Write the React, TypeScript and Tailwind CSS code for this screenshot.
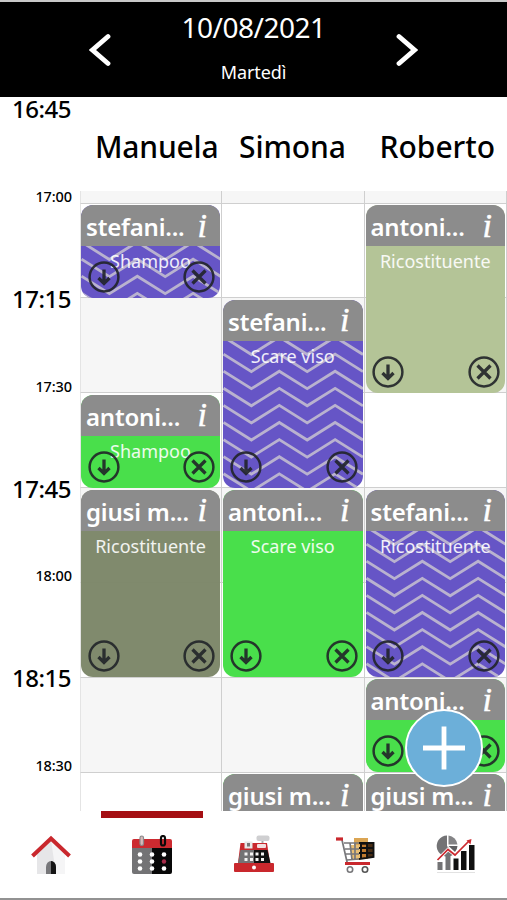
import type { ReactNode } from 'react';
import clsx from 'clsx';

type Tone = 'zigzag' | 'green' | 'sage' | 'olive';

interface Appointment {
  client: string;
  service: string;
  tone: Tone;
  place: string;
}

const operators = [
  { name: 'Manuela', style: 'pl-[15px] tracking-[-0.2px]' },
  { name: 'Simona', style: 'pl-[17px] tracking-[-0.1px]' },
  { name: 'Roberto', style: 'pl-[15px]' },
];

const times = ['16:45', '17:00', '17:15', '17:30', '17:45', '18:00', '18:15', '18:30'];

const appointments: Appointment[] = [
  { client: 'stefani...', service: 'Shampoo', tone: 'zigzag', place: 'col-start-1 row-start-2' },
  { client: 'antoni...', service: 'Ricostituente', tone: 'sage', place: 'col-start-3 row-start-2 row-span-2' },
  { client: 'stefani...', service: 'Scare viso', tone: 'zigzag', place: 'col-start-2 row-start-3 row-span-2' },
  { client: 'antoni...', service: 'Shampoo', tone: 'green', place: 'col-start-1 row-start-4' },
  { client: 'giusi m...', service: 'Ricostituente', tone: 'olive', place: 'col-start-1 row-start-5 row-span-2' },
  { client: 'antoni...', service: 'Scare viso', tone: 'green', place: 'col-start-2 row-start-5 row-span-2' },
  { client: 'stefani...', service: 'Ricostituente', tone: 'zigzag', place: 'col-start-3 row-start-5 row-span-2' },
  { client: 'antoni...', service: '', tone: 'green', place: 'col-start-3 row-start-7' },
  { client: 'giusi m...', service: '', tone: 'green', place: 'col-start-2 row-start-8' },
  { client: 'giusi m...', service: '', tone: 'green', place: 'col-start-3 row-start-8' },
];

const toneStyles: Record<Tone, string> = {
  zigzag: 'bg-[#6655c6]',
  green: 'bg-[#49df4b]',
  sage: 'bg-[#b4c497]',
  olive: 'bg-[#7c8668]/97',
};

const rows = [
  'row-start-1 bg-[#f6f6f6]',
  'row-start-2 bg-white',
  'row-start-3 bg-[#f6f6f6]',
  'row-start-4 bg-white',
  'row-start-5 bg-[#f6f6f6]',
  'row-start-6 bg-white',
  'row-start-7 bg-[#f6f6f6]',
  'row-start-8 bg-white',
];

const cols = ['col-start-1 border-l border-l-[#e4e4e4]', 'col-start-2', 'col-start-3'];

// one chevron line every 17.1px, starting just above the card body
const waves = Array.from({ length: 13 }, (_, i) => 19.9 + i * 17.1);

function Zigzag() {
  return (
    <svg className="absolute inset-0 h-full w-full" fill="none" stroke="#b9b2cf" strokeWidth="2.8">
      {waves.map((y) => (
        <path key={y} d={`M0.5 ${y}l27.9 17.5l27.9 -17.5l27.9 17.5l27.9 -17.5l27.9 17.5`} />
      ))}
    </svg>
  );
}

function RoundIcon({ d }: { d: string }) {
  return (
    <svg width="32" height="32" viewBox="0 0 32 32" fill="none" stroke="#202428" strokeOpacity="0.9">
      <circle cx="16" cy="16" r="14.4" strokeWidth="2.5" />
      <path d={d} strokeWidth="3.3" />
    </svg>
  );
}

function AppointmentCard({ client, service, tone, place }: Appointment) {
  return (
    <article
      className={clsx(
        'relative mt-[1.5px] mr-[2px] mb-[0.5px] ml-px flex flex-col overflow-hidden rounded-[12px]',
        toneStyles[tone],
        place,
      )}
    >
      {tone === 'zigzag' && <Zigzag />}
      <div className="relative flex h-[41px] shrink-0 items-center justify-between bg-[#8c8c8c] pr-[13px] pl-[5px] text-white">
        <span className="pt-[3px] text-[24px] leading-[36px] font-semibold tracking-[-0.2px] whitespace-nowrap">
          {client}
        </span>
        <i className="font-['Liberation_Serif',serif] text-[34px] leading-[36px] [-webkit-text-stroke:0.5px_white]">
          i
        </i>
      </div>
      <p className="relative mt-[3px] -mb-[24px] h-[24px] text-center text-[18px] leading-[24px] text-white/90">
        {service}
      </p>
      <div className="relative mt-auto mb-[5px] flex justify-between pr-[5px] pl-[6.5px]">
        <RoundIcon d="M16 8.500V22M10.500 17L16 22.500L21.500 17" />
        <RoundIcon d="M9.500 9.500L22.500 22.500M22.500 9.500L9.500 22.500" />
      </div>
    </article>
  );
}

function HouseIcon() {
  return (
    <>
      <path d="M6 18L20 5L34 18V39H6Z" fill="#e6e6e8" />
      <path d="M20 5L34 18V39H25Z" fill="#f5f5f6" />
      <path d="M15 39V32a5 6 0 0 1 10 0V39Z" fill="#77777a" />
      <path d="M20 26a5 6 0 0 1 5 6V39H20Z" fill="#151515" />
      <path d="M1.500 21L20 3.500L38.500 21" fill="none" stroke="#c9282d" strokeWidth="4" />
    </>
  );
}

function CalendarIcon() {
  return (
    <>
      <path d="M0 10H20V39H2Q0 39 0 37Z" fill="#737375" />
      <path d="M20 10H40V37Q40 39 38 39H20Z" fill="#080808" />
      <path d="M0 13V6Q0 4 2 4H38Q40 4 40 6V13Z" fill="#cc2a30" />
      <rect x="8" y="1" width="3.500" height="9.500" rx="1.700" fill="#d8b9ba" stroke="#8a8a8c" strokeWidth="1.200" />
      <rect x="29" y="1" width="4" height="9.500" rx="2" fill="none" stroke="#0a0a0a" strokeWidth="2.200" />
      <g fill="#fff">
        <circle cx="8" cy="19.500" r="2.300" />
        <circle cx="20" cy="19.500" r="2.300" />
        <circle cx="32" cy="19.500" r="2.300" />
        <circle cx="8" cy="26.500" r="2.300" />
        <circle cx="20" cy="26.500" r="2.300" />
        <circle cx="8" cy="33.500" r="2.300" />
        <circle cx="20" cy="33.500" r="2.300" />
        <circle cx="32" cy="33.500" r="2.300" />
      </g>
      <circle cx="32" cy="26.500" r="2.200" fill="#a82c4a" />
    </>
  );
}

function RegisterIcon() {
  return (
    <>
      <path d="M28.500 5V10" stroke="#aaa" strokeWidth="2" />
      <rect x="22.500" y="0.500" width="13" height="5.500" rx="2" fill="#cfcfd1" />
      <path d="M6.500 8H33L36 28H4Z" fill="#c9282d" />
      <path d="M6.500 15H20V28H4Z" fill="#737375" />
      <path d="M20 15H33.500L36.500 28H20Z" fill="#111" />
      <rect x="10.500" y="6.500" width="8" height="7" fill="#e8e8e8" />
      <rect x="13" y="8" width="3" height="3.500" fill="#777" />
      <rect x="23" y="9" width="9" height="4" rx="1" fill="#f3dede" />
      <path
        d="M10.500 17.500h3v3h-3zM16 17.500h3v3h-3zM21.500 17.500h3v3h-3zM27 17.500h3v3h-3zM10.500 23h3v3h-3zM16 23h3v3h-3zM21.500 23h3v3h-3zM27 23h3v3h-3z"
        fill="#f4f4f4"
      />
      <rect x="0" y="28" width="40" height="9" rx="1" fill="#c9282d" />
      <circle cx="20" cy="32.500" r="2" fill="#fff" />
    </>
  );
}

function CartIcon() {
  return (
    <>
      <path d="M19 3H33V24H19Z" fill="#dba553" />
      <path d="M16 10H25V25H16Z" fill="#e9bf74" />
      <path d="M25 9H38V22L25 24Z" fill="#4a2e14" />
      <path d="M27 10H32V23H27Z" fill="#c07b30" />
      <path
        d="M7 5L12.500 29M9 8H24M10 14H24M11 19H24M12 25L24 24M15 8L17 25M20 8V25"
        fill="none"
        stroke="#77777a"
        strokeWidth="1.700"
      />
      <path d="M24 8H38.500V22L24 24M24 13H38M24 18H38M26 8V24M32 8V23" fill="none" stroke="#111" strokeWidth="1.900" />
      <path d="M1 4H8" stroke="#c9282d" strokeWidth="3.200" />
      <path d="M10 28.500H35" stroke="#c9282d" strokeWidth="3" />
      <circle cx="15" cy="34.500" r="2.700" fill="#fff" stroke="#77777a" strokeWidth="1.600" />
      <circle cx="30" cy="34.500" r="2.700" fill="#fff" stroke="#555" strokeWidth="1.600" />
    </>
  );
}

function ChartIcon() {
  return (
    <>
      <path d="M11 11V0.500A10.500 10.500 0 1 0 18 19Z" fill="#737375" />
      <path d="M12.500 0.500A10 10 0 0 1 21.500 9.500H12.500Z" fill="#848486" />
      <path d="M12.500 11H21.500A10 10 0 0 1 19 17Z" fill="#606062" />
      <path d="M1.500 27H6.500V35H1.500ZM9.500 20H14.500V35H9.500Z" fill="#737375" />
      <path d="M17.500 23.500H22.500V35H17.500ZM25 16H30.500V35H25ZM33 10H38.500V35H33Z" fill="#101010" />
      <path d="M1.500 25L12 14.500L19 20L33 6" fill="none" stroke="#fff" strokeWidth="3.200" />
      <path d="M1.500 25L12 14.500L19 20L33 6" fill="none" stroke="#cc2a30" strokeWidth="1.700" />
      <path d="M30.500 5.500L35.500 4L34.500 9.500Z" fill="#cc2a30" />
      <path d="M1 37.500H39" stroke="#e2e2e2" strokeWidth="1" />
    </>
  );
}

function NavItem({ active, children }: { active?: boolean; children: ReactNode }) {
  return (
    <button type="button" className="flex flex-1 flex-col items-center">
      <span className={clsx('h-[7px] w-full', active && 'bg-[#a50f13]')} />
      <svg className="mt-[17px]" width="40" height="40" viewBox="0 0 40 40">
        {children}
      </svg>
    </button>
  );
}

function App() {
  return (
    <div className="flex h-[900px] w-[507px] flex-col overflow-hidden border-t-2 border-b-2 border-t-[#c8c8c8] border-b-[#929292] bg-white font-['Noto_Sans','Open_Sans',sans-serif] text-black">
      <header className="flex h-[95px] shrink-0 items-center justify-between bg-black px-[89px] text-white">
        <svg width="23" height="34" viewBox="0 0 23 34" fill="none" stroke="currentColor" strokeWidth="4.800" strokeLinecap="round">
          <path d="M19 3.500L3.500 17L19 30.500" />
        </svg>
        <div className="flex h-full flex-col items-center">
          <h1 className="mt-[7px] text-[28px] leading-[36px] tracking-[-0.500px]">10/08/2021</h1>
          <p className="mt-[15px] text-[18px] leading-[24px] tracking-[-0.1px]">Martedì</p>
        </div>
        <svg width="23" height="34" viewBox="0 0 23 34" fill="none" stroke="currentColor" strokeWidth="4.800" strokeLinecap="round">
          <path d="M4 3.500L19.500 17L4 30.500" />
        </svg>
      </header>

      <main className="flex h-[714px] shrink-0 overflow-hidden">
        <aside className="w-[80px] shrink-0 text-right font-medium">
          {times.map((time, i) => (
            <div key={time} className="h-[94.900px]">
              {i % 2 === 0 ? (
                <p className="pr-[9px] text-[24px] leading-[24px] tracking-[-0.5px]">{time}</p>
              ) : (
                <p className="pr-[8px] text-[14.500px] leading-[8px] tracking-[-0.1px]">{time}</p>
              )}
            </div>
          ))}
        </aside>
        <div className="flex flex-1 flex-col">
          <div className="grid h-[94px] shrink-0 grid-cols-[142px_142.500px_142.500px] items-center">
            {operators.map(({ name, style }) => (
              <h2 key={name} className={clsx('pt-[6px] text-[30px] leading-[36px] font-medium', style)}>
                {name}
              </h2>
            ))}
          </div>
          <div className="grid grid-cols-[142px_142.500px_142.500px] grid-rows-[12.500px_repeat(7,94.900px)]">
            {rows.map((row) =>
              cols.map((col) => (
                <div key={row + col} className={clsx('border-r border-b border-r-[#cfcfcf] border-b-[#cfcfcf]', row, col)} />
              )),
            )}
            {appointments.map((item) => (
              <AppointmentCard key={item.place} {...item} />
            ))}
          </div>
        </div>
      </main>

      <nav className="flex h-[87px] shrink-0">
        <NavItem>
          <HouseIcon />
        </NavItem>
        <NavItem active>
          <CalendarIcon />
        </NavItem>
        <NavItem>
          <RegisterIcon />
        </NavItem>
        <NavItem>
          <CartIcon />
        </NavItem>
        <NavItem>
          <ChartIcon />
        </NavItem>
      </nav>

      <button
        type="button"
        className="fixed top-[709px] left-[405px] flex size-[78px] items-center justify-center rounded-full border-2 border-white bg-[#6cafd9]"
      >
        <svg width="44" height="44" viewBox="0 0 44 44" stroke="#fff" strokeWidth="4.800">
          <path d="M22 0.500V43.500M1 22H43" />
        </svg>
      </button>
    </div>
  );
}

export default App;
